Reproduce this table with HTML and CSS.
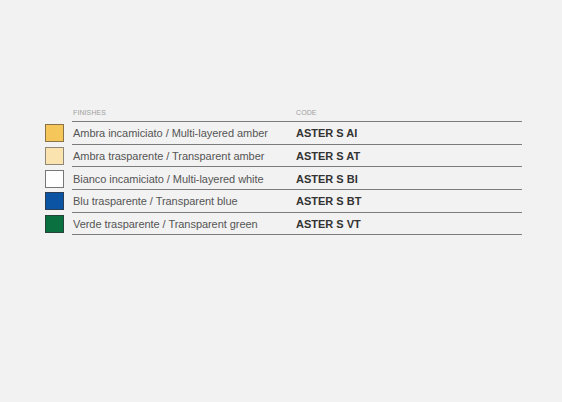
FILE: index.html
```html
<!DOCTYPE html>
<html>
<head>
<meta charset="utf-8">
<link rel="stylesheet" href="styles.css">
</head>
<body>
<div class="table">
  <div class="row head">
    <span class="swatch none"></span>
    <div class="cells">
      <span class="finish">FINISHES</span>
      <span class="code">CODE</span>
    </div>
  </div>
  <div class="row">
    <span class="swatch amber"></span>
    <div class="cells">
      <span class="finish">Ambra incamiciato / Multi-layered amber</span>
      <span class="code">ASTER S AI</span>
    </div>
  </div>
  <div class="row">
    <span class="swatch light-amber"></span>
    <div class="cells">
      <span class="finish">Ambra trasparente / Transparent amber</span>
      <span class="code">ASTER S AT</span>
    </div>
  </div>
  <div class="row">
    <span class="swatch white"></span>
    <div class="cells">
      <span class="finish">Bianco incamiciato / Multi-layered white</span>
      <span class="code">ASTER S BI</span>
    </div>
  </div>
  <div class="row">
    <span class="swatch blue"></span>
    <div class="cells">
      <span class="finish">Blu trasparente / Transparent blue</span>
      <span class="code">ASTER S BT</span>
    </div>
  </div>
  <div class="row">
    <span class="swatch green"></span>
    <div class="cells">
      <span class="finish">Verde trasparente / Transparent green</span>
      <span class="code">ASTER S VT</span>
    </div>
  </div>
</div>
</body>
</html>
```
FILE: styles.css
```css
html, body {
  margin: 0;
  padding: 0;
  background: #f2f2f2;
  font-family: "Liberation Sans", Arial, sans-serif;
}
body {
  width: 562px;
  height: 402px;
  overflow: hidden;
}
.table {
  display: flex;
  flex-direction: column;
  padding-top: 102px;
  padding-left: 45px;
}
.row {
  display: flex;
  align-items: center;
  gap: 8px;
  height: 22.7px;
}
.row.head {
  height: 20px;
}
.swatch {
  box-sizing: border-box;
  width: 19px;
  height: 18px;
  border: 1px solid #6a6a6a;
  flex: none;
}
.swatch.none { border: none; background: transparent; }
.amber { background: #f5c75a; border-color: #8a7346; }
.light-amber { background: #fbe3b0; border-color: #8f8777; }
.white { background: #ffffff; border-color: #777; }
.blue { background: #0b54a4; border-color: #2c3e55; }
.green { background: #0a7040; border-color: #24443a; }
.cells {
  box-sizing: border-box;
  display: flex;
  align-items: center;
  width: 450px;
  height: 100%;
  border-bottom: 1px solid #7c7c7c;
  padding-top: 1px;
}
.finish {
  width: 223px;
  padding-left: 1px;
  font-size: 11px;
  color: #555;
  letter-spacing: -0.05px;
}
.code {
  font-size: 11px;
  font-weight: bold;
  color: #333;
}
.head .finish, .head .code {
  font-size: 7px;
  font-weight: normal;
  color: #a0a0a0;
  letter-spacing: 0.1px;
}
```
